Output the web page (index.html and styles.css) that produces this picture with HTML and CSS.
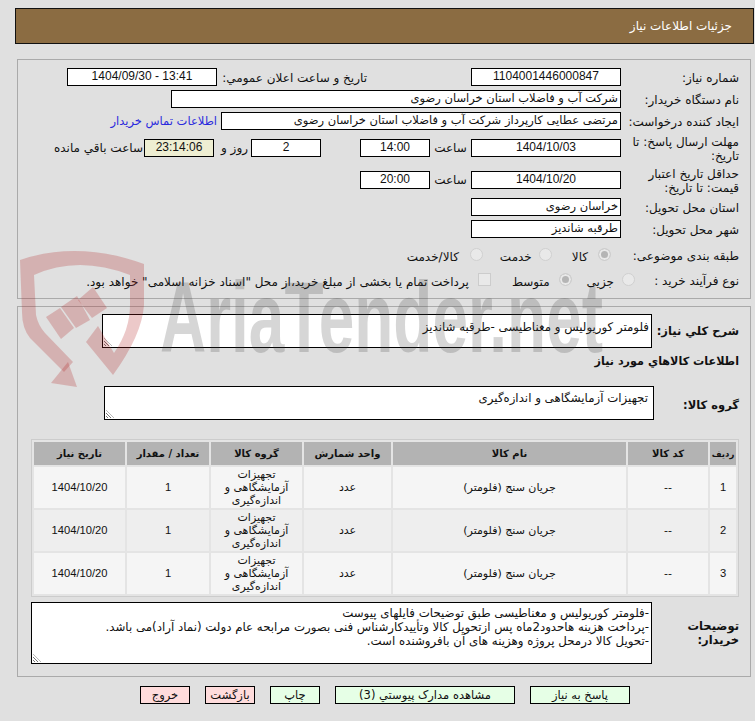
FILE: index.html
```html
<!DOCTYPE html>
<html lang="fa" dir="rtl">
<head>
<meta charset="utf-8">
<title>جزئیات اطلاعات نیاز</title>
<link rel="stylesheet" href="styles.css">
</head>
<body>
<main class="page">
  <header class="title-bar"><h1>جزئیات اطلاعات نیاز</h1></header>

  <section class="panel top-panel">
    <div class="row">
      <label class="lab">شماره نیاز:</label>
      <span class="box w150 center">1104001446000847</span>
      <label class="lab-public">تاریخ و ساعت اعلان عمومي:</label>
      <span class="box w150 center" dir="ltr">1404/09/30 - 13:41</span>
    </div>
    <div class="row">
      <label class="lab">نام دستگاه خریدار:</label>
      <span class="box w450">شرکت آب و فاضلاب استان خراسان رضوی</span>
    </div>
    <div class="row">
      <label class="lab">ایجاد کننده درخواست:</label>
      <span class="box w400">مرتضی عطایی کارپرداز شرکت آب و فاضلاب استان خراسان رضوی</span>
      <a class="contact" href="#">اطلاعات تماس خریدار</a>
    </div>
    <div class="row tall r4">
      <label class="lab">مهلت ارسال پاسخ: تا تاریخ:</label>
      <span class="box w150 center">1404/10/03</span>
      <span class="txt t-hour">ساعت</span>
      <span class="box w70 center">14:00</span>
      <span class="box w70 center gap-days">2</span>
      <span class="txt t-days">روز و</span>
      <span class="box w70 center timer">23:14:06</span>
      <span class="txt t-left">ساعت باقي مانده</span>
    </div>
    <div class="row tall r5">
      <label class="lab">حداقل تاریخ اعتبار قیمت: تا تاریخ:</label>
      <span class="box w150 center">1404/10/20</span>
      <span class="txt t-hour">ساعت</span>
      <span class="box w70 center">20:00</span>
    </div>
    <div class="row r6">
      <label class="lab">استان محل تحویل:</label>
      <span class="box w150">خراسان رضوی</span>
    </div>
    <div class="row">
      <label class="lab">شهر محل تحویل:</label>
      <span class="box w150">طرقبه شاندیز</span>
    </div>
    <div class="row choice r8">
      <label class="lab">طبقه بندی موضوعی:</label>
      <span class="radio on c1"></span><span class="txt o1">کالا</span>
      <span class="radio c2"></span><span class="txt o2">خدمت</span>
      <span class="radio c3"></span><span class="txt o3">کالا/خدمت</span>
    </div>
    <div class="row choice r9">
      <label class="lab">نوع فرآیند خرید :</label>
      <span class="radio c4"></span><span class="txt o4">جزیی</span>
      <span class="radio on c5"></span><span class="txt o5">متوسط</span>
      <span class="check"></span>
      <span class="txt">پرداخت تمام یا بخشی از مبلغ خرید،از محل "اسناد خزانه اسلامی" خواهد بود.</span>
    </div>
  </section>

  <section class="panel bottom-panel">
    <div class="field f-desc">
      <label class="blab">شرح کلي نیاز:</label>
      <div class="area a-desc">فلومتر کوریولیس و مغناطیسی -طرقبه شاندیز<i class="grip"></i></div>
    </div>
    <h2 class="blab goods-title">اطلاعات کالاهاي مورد نیاز</h2>
    <div class="field f-group">
      <label class="blab">گروه کالا:</label>
      <div class="area a-group">تجهیزات آزمایشگاهی و اندازه‌گیری<i class="grip"></i></div>
    </div>
    <table class="goods">
      <colgroup><col class="c-a"><col class="c-b"><col class="c-c"><col class="c-d"><col class="c-e"><col class="c-f"><col class="c-g"></colgroup>
      <thead>
        <tr><th>ردیف</th><th>کد کالا</th><th>نام کالا</th><th>واحد شمارش</th><th>گروه کالا</th><th>تعداد / مقدار</th><th>تاریخ نیاز</th></tr>
      </thead>
      <tbody>
        <tr><td>1</td><td>--</td><td>جریان سنج (فلومتر)</td><td>عدد</td><td>تجهیزات آزمایشگاهی و اندازه‌گیری</td><td>1</td><td>1404/10/20</td></tr>
        <tr><td>2</td><td>--</td><td>جریان سنج (فلومتر)</td><td>عدد</td><td>تجهیزات آزمایشگاهی و اندازه‌گیری</td><td>1</td><td>1404/10/20</td></tr>
        <tr><td>3</td><td>--</td><td>جریان سنج (فلومتر)</td><td>عدد</td><td>تجهیزات آزمایشگاهی و اندازه‌گیری</td><td>1</td><td>1404/10/20</td></tr>
      </tbody>
    </table>
    <div class="field f-notes">
      <label class="blab notes-lab">توضیحات خریدار:</label>
      <div class="area a-notes">-فلومتر کوریولیس و مغناطیسی طبق توضیحات فایلهای پیوست<br>-پرداخت هزینه هاحدود2ماه پس ازتحویل کالا وتأییدکارشناس فنی بصورت مرابحه عام دولت (نماد آراد)می باشد.<br>-تحویل کالا درمحل پروژه وهزینه های آن بافروشنده است.<i class="grip"></i></div>
    </div>
  </section>

  <nav class="actions">
    <button class="btn green b-reply">پاسخ به نیاز</button>
    <button class="btn green b-docs">مشاهده مدارک پیوستي (3)</button>
    <button class="btn green small">چاپ</button>
    <button class="btn red small">بازگشت</button>
    <button class="btn red small">خروج</button>
  </nav>
</main>
<svg class="watermark" width="755" height="721" viewBox="0 0 755 721" aria-hidden="true">
  <g class="wm-red">
    <path d="M20 260Q78 240 144 264L144 305Q142 335 113 375L86 342L98 326L114 353Q130 330 130 305L130 275Q78 255 34 275L36 315Q38 325 45 333L73 362L64 372L30 338Q22 328 22 312Z"/>
    <path d="M46 317L60 308L74 328L61 339Z"/>
    <path d="M61 307L77 296L90 320L76 328Z"/>
    <path d="M78 300L93 287L107 308L92 318Z"/>
    <path d="M68 362L77 387L51 383Z"/>
  </g>
  <text x="160" y="352" class="wm-text" textLength="443" lengthAdjust="spacingAndGlyphs">AriaTender.net</text>
</svg>
</body>
</html>
```

FILE: styles.css
```css
* { box-sizing: border-box; }
html, body { margin: 0; height: 721px; overflow: hidden; }
body {
  background: #e0e0e0;
  color: #111;
  font: 12px/16px "DejaVu Sans", "Liberation Sans", sans-serif;
  position: relative;
}
.watermark { position: absolute; left: 0; top: 0; pointer-events: none; direction: ltr; }
.wm-red { fill: rgba(175, 30, 30, .24); }
.wm-text { font: bold 100px "Liberation Sans", sans-serif; fill: rgba(60, 60, 60, .21); direction: ltr; }
.page { padding: 8px 1px 0 0; }
.title-bar {
  height: 36px; margin-left: 15px;
  background: #8b6c42; border: 1px solid #111;
  display: flex; align-items: center; padding-right: 21px;
}
.title-bar h1 { margin: 0; font-size: 12px; font-weight: normal; color: #fff; }
.panel { border: 1px solid #aaa; margin: 0 3px 0 0; margin-left: 17px; }
.top-panel { margin-top: 15px; height: 240px; padding-top: 8px; }
.bottom-panel { margin-top: 7px; height: 371px; position: relative; }
.row { display: flex; align-items: center; height: 18px; margin-bottom: 4px; padding-right: 11px; }
.lab { width: 118px; flex: none; line-height: 14px; padding-top: 2px; }
.box {
  height: 18px; background: #fff; border: 1px solid #000;
  padding: 0 2px; line-height: 15px; white-space: nowrap; overflow: hidden; flex: none;
  font-size: 11.5px;
}
.center { text-align: center; font-family: "Liberation Sans", "DejaVu Sans", sans-serif; font-size: 12px; }
.w150 { width: 150px; } .w450 { width: 450px; } .w400 { width: 400px; } .w70 { width: 70px; }
.lab-public { margin-right: 104px; width: 150px; white-space: nowrap; padding-left: 4px; padding-top: 2px; }
.contact { color: #2a2add; text-decoration: none; margin-right: 4px; white-space: nowrap; font-size: 11.5px; }
.txt { white-space: nowrap; flex: none; }
.t-hour { width: 41px; text-align: center; }
.gap-days { margin-right: 39px; }
.t-days { margin: 0 3px 0 0; width: 34px; }
.timer { background: #eeeed2; }
.t-left { margin-right: 1px; }
.r4 { margin-top: 9px; margin-bottom: 14px; }
.r5 { margin-bottom: 9px; }
.r8 { margin-top: 8px; margin-bottom: 0; }
.r9 { margin-top: 7px; }
.choice .txt { padding-top: 3px; }
.radio {
  width: 13px; height: 13px; border-radius: 50%; background: #e9e9e9; border: 1px solid #d0d0d0; flex: none; margin-top: -2px;
}
.radio.on { box-shadow: inset 0 0 0 2px #e9e9e9; background: #b5b5b5; }
.c1 { margin-right: 10px; } .o1 { margin-right: 10px; }
.c2 { margin-right: 20px; } .o2 { margin-right: 7px; }
.c3 { margin-right: 17px; } .o3 { margin-right: 11px; }
.c4 { margin-right: -14px; } .o4 { margin-right: 8px; }
.c5 { margin-right: 15px; } .o5 { margin-right: 9px; }
.check { width: 13px; height: 13px; border: 1px solid #ccc; background: #e9e9e9; margin: -2px 21px 0 9px; flex: none; }
.blab { font-weight: bold; font-size: 11.5px; margin: 0; }
.field { display: flex; align-items: center; }
.area {
  background: #fff; border: 1px solid #000; position: relative;
  padding: 2px; line-height: 14px; font-size: 11.8px;
}
.grip {
  position: absolute; left: 1px; bottom: 1px; width: 8px; height: 8px;
  background: repeating-linear-gradient(45deg, transparent 0 1px, #777 1px 2px);
  clip-path: polygon(0 0, 100% 100%, 0 100%);
}
.f-desc { position: absolute; top: 7px; right: 11px; }
.f-desc .blab { width: 87px; flex: none; }
.a-desc { width: 550px; height: 34px; padding-top: 5px; }
.goods-title { position: absolute; top: 47px; right: 11px; font-size: 11.2px; }
.f-group { position: absolute; top: 79px; right: 11px; }
.f-group .blab { width: 85px; flex: none; padding-top: 3px; }
.a-group { width: 550px; height: 34px; padding: 4px 5px; }
.goods {
  position: absolute; top: 132px; left: 13px; width: 707px;
  border: 1px solid #ccc; border-collapse: separate; border-spacing: 2px;
  table-layout: fixed; background: #e4e4e4;
}
.c-a { width: 26px; } .c-b { width: 80px; } .c-c { width: 233px; } .c-d { width: 87px; } .c-e { width: 91px; } .c-f { width: 82px; } .c-g { width: 91px; }
.goods th { background: #b3b3b3; height: 23px; padding: 0; font-size: 10px; }
.goods th:first-child { font-size: 8.5px; }
.goods td { height: 41px; padding: 0 6px; text-align: center; font-size: 11px; line-height: 13px; background: #f5f5f5; }
.goods tbody tr:nth-child(2) td { background: #eee; }
.goods td:nth-child(1), .goods td:nth-child(6), .goods td:nth-child(7) { font-family: "Liberation Sans", sans-serif; font-size: 11.2px; }
.f-notes { position: absolute; top: 295px; right: 11px; }
.notes-lab { width: 87px; flex: none; line-height: 14px; }
.a-notes { width: 621px; height: 62px; padding: 3px 2px; }
.actions { display: flex; gap: 15px; margin-top: 9px; height: 18px; padding-right: 124px; }
.btn {
  width: 100px; height: 18px; border: 1px solid #000; color: #111; padding: 0;
  font: 11.5px/14px "DejaVu Sans", sans-serif; flex: none;
}
.green { background: #e6ffe6; }
.red { background: #ffdcdc; }
.b-docs { width: 180px; }
.small { width: 50px; }
```
